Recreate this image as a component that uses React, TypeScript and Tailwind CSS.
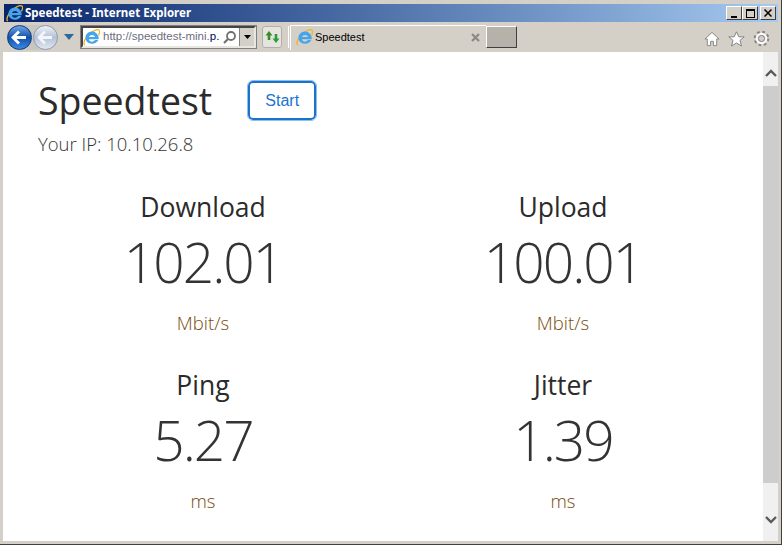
import React from 'react';

function IeLogo({ size = 20 }: { size?: number }) {
  return (
    <svg width={size} height={size} viewBox="0 0 20 20" className="shrink-0">
      {/* gold ring behind the e */}
      <path d="M2 19C-0.500 16.500 3 9.500 8 5.500s9.500-5.500 11-4c1 1.200.5 3.500-.8 6" fill="none" stroke="#f0b429" strokeWidth="1.500" />
      <path d="M10.500 3a7.800 7.800 0 0 1 7.800 9.200H7c.3 3 5 3.800 7 .8h4c-2.200 5.600-12.500 6.200-14.800-.6C1.700 7.500 5.800 3 10.500 3Zm-3.400 6.400H14c-.2-3.200-6.300-3.300-6.900 0Z" fill="#45a5ea" />
    </svg>
  );
}

function NavButton({ back }: { back?: boolean }) {
  return (
    <div
      className={
        back
          ? 'w-[25px] h-[25px] rounded-full flex items-center justify-center border border-[#123a7a] bg-gradient-to-b from-[#6ea4e4] via-[#0f50ae] to-[#3b8ae0]'
          : 'w-[25px] h-[25px] rounded-full flex items-center justify-center border border-[#8f9bb0] bg-gradient-to-b from-[#eef2f7] via-[#b4c1d6] to-[#e2e8f1]'
      }
    >
      <svg width="17" height="15" viewBox="0 0 17 15">
        <path
          d="M8 1.500 2 7.500l6 6M2.500 7.500H15"
          fill="none"
          stroke={back ? '#ffffff' : '#f2f5f9'}
          strokeWidth="2.800"
        />
      </svg>
    </div>
  );
}

function WinButton({ children }: { children: React.ReactNode }) {
  return (
    <div className="w-4 h-[14px] flex items-center justify-center bg-[#d4d0c8] border-t border-l border-t-white border-l-white border-b border-r border-b-[#404040] border-r-[#404040]">
      {children}
    </div>
  );
}

function Stat({ label, value, unit }: { label: string; value: string; unit: string }) {
  return (
    <div className="flex flex-col items-center">
      <div className="h-[38px] text-[26.5px] leading-[38px] text-[#2b2b2b]">{label}</div>
      <div className="h-[76px] mt-[-2px] text-[55px] leading-[76px] font-light text-[#333333] tracking-[-1.900px]">{value}</div>
      <div className="h-[40px] mt-[3px] text-[18.5px] leading-[40px] font-light text-[#7a4a10]">{unit}</div>
    </div>
  );
}

export default function App() {
  return (
    <div className="w-[782px] h-[545px] overflow-hidden border-r border-b border-r-[#404040] border-b-[#404040]">
      <div className="h-full flex flex-col bg-[#d4d0c8] border-t-[4px] border-l-[3px] border-r-[3px] border-b-[3px] border-[#d4d0c8] font-['Open_Sans',sans-serif]">
        {/* title bar */}
        <div className="h-[18px] shrink-0 flex items-center ml-[1px] pl-[2px] pr-[2px] bg-gradient-to-r from-[#0a246a] to-[#a6caf0]">
          <IeLogo size={17} />
          <span className="ml-[2px] text-[11.5px] font-bold text-white font-['Noto_Sans',sans-serif]">Speedtest - Internet Explorer</span>
          <div className="ml-auto flex items-center">
            <WinButton>
              <div className="w-[6px] h-[2px] bg-black mt-[7px]" />
            </WinButton>
            <WinButton>
              <div className="w-[9px] h-[9px] border border-black border-t-2" />
            </WinButton>
            <div className="w-[2px]" />
            <WinButton>
              <svg width="8" height="8" viewBox="0 0 8 8">
                <path d="M0.500 0.500l7 7M7.500 0.500l-7 7" stroke="#000" strokeWidth="1.500" />
              </svg>
            </WinButton>
          </div>
        </div>

        {/* toolbar */}
        <div className="h-[30px] shrink-0 flex items-center pl-[4px] pr-[5px]">
          <div className="flex items-center gap-[1px] rounded-full bg-[#c8c6c0]">
            <NavButton back />
            <NavButton />
          </div>
          <svg width="10" height="6" viewBox="0 0 10 6" className="ml-[6px]">
            <path d="M0 0h10L5 6Z" fill="#2a6a9c" />
          </svg>
          <div className="ml-[7px] w-[175px] h-[22px] flex items-center bg-white border-2 border-t-[#444444] border-l-[#444444] border-r-[#e8e6e0] border-b-[#e8e6e0] outline outline-1 outline-[#808080]">
            <IeLogo size={17} />
            <span className="ml-[3px] w-[117px] shrink-0 overflow-hidden whitespace-nowrap text-[11.5px] text-[#6d6d80] font-['Liberation_Sans',sans-serif]">
              http://speedtest-mini.<span className="text-[#000060]">p.</span>
            </span>
            <svg width="15" height="15" viewBox="0 0 15 15" className="ml-[2px] shrink-0">
              <circle cx="9" cy="6" r="4" fill="none" stroke="#707070" strokeWidth="1.800" />
              <path d="M6 9l-4 4" stroke="#707070" strokeWidth="2.200" />
            </svg>
            <div className="ml-auto w-[15px] h-full shrink-0 flex items-center justify-center bg-[#d4d0c8] border-l border-[#808080]">
              <svg width="7" height="4" viewBox="0 0 7 4">
                <path d="M0 0h7L3.500 4Z" fill="#000" />
              </svg>
            </div>
          </div>
          <div className="ml-[6px] w-[20px] h-[22px] flex items-center justify-center rounded-[3px] border border-[#b0aea8] bg-[#e6e4df]">
            <svg width="15" height="14" viewBox="0 0 15 14">
              <path d="M4 1 0.500 5.500h2.200V10h2.600V5.500h2.200Z" fill="#3a8a2a" />
              <path d="M11 13l3.500-4.500h-2.200V4H9.700v4.500H7.500Z" fill="#2f9a3a" />
            </svg>
          </div>
          <div className="ml-[6px] w-[1px] h-[22px] bg-white" />
          <div className="ml-[1px] w-[196px] h-[25px] flex items-center pl-[5px] border-t border-l border-white">
            <IeLogo size={17} />
            <span className="ml-[2px] text-[11px] text-black font-['Liberation_Sans',sans-serif]">Speedtest</span>
            <svg width="9" height="9" viewBox="0 0 9 9" className="ml-auto mr-[6px]">
              <path d="M1 1l7 7M8 1 1 8" stroke="#8c8a84" strokeWidth="2.200" />
            </svg>
          </div>
          <div className="w-[31px] h-[22px] bg-[#b6b2aa] border-t border-l border-t-white border-l-white border-r border-b border-r-[#404040] border-b-[#404040]" />
          <div className="ml-auto flex items-center gap-[8px] mt-[3px] mr-[3px]">
            <svg width="16" height="16" viewBox="0 0 17 16">
              <path d="M8.500 1 1 8h2.500v7h3.500v-4.500h3V15h3.500V8H16Z" fill="#fff" stroke="#858585" />
            </svg>
            <svg width="17" height="16" viewBox="0 0 17 16">
              <path d="M8.500.8l2.300 5h5.400l-4.200 3.600 1.500 5.600-5-3-5 3 1.500-5.600L.8 5.800h5.400Z" fill="#fff" stroke="#858585" />
            </svg>
            <svg width="17" height="17" viewBox="0 0 17 17">
              <circle cx="8.500" cy="8.500" r="3" fill="none" stroke="#858585" />
              <circle cx="8.500" cy="8.500" r="6" fill="none" stroke="#858585" strokeWidth="3.600" strokeDasharray="2.400 2.310" />
              <circle cx="8.500" cy="8.500" r="4.800" fill="none" stroke="#fff" strokeWidth="2" />
            </svg>
          </div>
        </div>

        {/* page + scrollbar */}
        <div className="flex-1 min-h-0 flex bg-white">
          <main className="flex-1 min-w-0 pl-[35px] pt-[23px]">
            <div className="flex items-start">
              <h1 className="text-[37.500px] leading-[52px] text-[#2b2b2b] font-normal">Speedtest</h1>
              <button className="ml-[36px] mt-[6px] w-[68px] h-[39px] rounded-[5px] bg-white border-2 border-[#1a73c8] outline outline-1 outline-[#8cc0f0] text-[16px] text-[#1a73d0] font-['Liberation_Sans',sans-serif]">
                Start
              </button>
            </div>
            <div className="mt-[5px] text-[18.500px] leading-[24px] font-light text-[#333333]">Your IP: 10.10.26.8</div>
            <div className="mt-[32px] ml-[-35px] grid grid-cols-2 pl-[20px] pr-[20px]">
              <Stat label="Download" value="102.01" unit="Mbit/s" />
              <Stat label="Upload" value="100.01" unit="Mbit/s" />
              <div className="mt-[23px]"><Stat label="Ping" value="5.27" unit="ms" /></div>
              <div className="mt-[23px]"><Stat label="Jitter" value="1.39" unit="ms" /></div>
            </div>
          </main>
          <div className="w-[15px] shrink-0 flex flex-col items-center bg-[#f0f0f0]">
            <svg width="12" height="8" viewBox="0 0 12 8" className="mt-[17px] shrink-0">
              <path d="M1 7l5-5 5 5" fill="none" stroke="#5a5a5a" strokeWidth="2.400" />
            </svg>
            <div className="mt-[9px] w-full h-[397px] bg-[#cdcdcd]" />
            <svg width="12" height="8" viewBox="0 0 12 8" className="mt-[33px] shrink-0">
              <path d="M1 1l5 5 5-5" fill="none" stroke="#5a5a5a" strokeWidth="2.400" />
            </svg>
          </div>
        </div>
      </div>
    </div>
  );
}
